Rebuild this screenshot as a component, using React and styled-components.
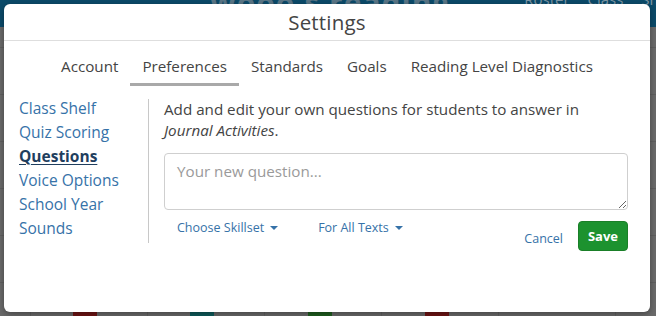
import React from "react";
import styled, { createGlobalStyle } from "styled-components";

const Global = createGlobalStyle`
  html, body { margin: 0; padding: 0; }
  body {
    width: 656px; height: 316px; overflow: hidden;
    font-family: "Open Sans", "Liberation Sans", sans-serif;
    background: #6b6b6b;
  }
`;

const Page = styled.div`
  position: relative;
  width: 656px;
  height: 316px;
  background: #6a6a6a;
  overflow: hidden;
`;

const TopBar = styled.div`
  height: 27px;
  background: #0b4a69;
  display: flex;
  align-items: flex-start;
  justify-content: space-between;
  padding: 0 0 0 210px;
  color: #6b8797;
  line-height: 1;
  overflow: hidden;
`;

const BrandGhost = styled.span`
  font-size: 30px;
  font-weight: 700;
  letter-spacing: 1px;
  margin-top: -12px;
  color: #5a7686;
`;

const NavGhost = styled.span`
  font-size: 15px;
  color: #7f97a5;
  margin-top: -8px;
  word-spacing: 14px;
  margin-right: -20px;
`;

const Grid = styled.div`
  height: 289px;
  background-image:
    linear-gradient(#5f5f5f 1px, transparent 1px),
    linear-gradient(90deg, #5f5f5f 1px, transparent 1px);
  background-size: 117px 47px;
  background-position: 30px 20px;
  position: relative;
`;

const Tile = styled.div`
  position: absolute;
  bottom: -10px;
  left: ${(p) => p.$x}px;
  width: 24px;
  height: 20px;
  border-radius: 4px;
  background: ${(p) => p.$c};
`;

const Modal = styled.div`
  position: absolute;
  left: 4px;
  top: 4px;
  width: 646px;
  height: 308px;
  background: #fff;
  border-radius: 6px;
  box-shadow: 0 2px 6px rgba(0, 0, 0, 0.35);
  display: flex;
  flex-direction: column;
  color: #444;
`;

const Header = styled.div`
  height: 36px;
  border-bottom: 1px solid #dedede;
  display: flex;
  align-items: center;
  justify-content: center;
  font-size: 20.5px;
  color: #444;
  letter-spacing: 0.2px;
`;

const Tabs = styled.div`
  display: flex;
  justify-content: center;
  margin-top: 12px;
`;

const Tab = styled.div`
  padding: 3px 12px 7px;
  font-size: 15.2px;
  color: #444;
  border-bottom: 3px solid ${(p) => (p.$active ? "#a9a9a9" : "transparent")};
`;

const Body = styled.div`
  display: flex;
  margin-top: 13px;
  padding: 0 22px 0 15px;
`;

const SideNav = styled.div`
  flex: 0 0 129px;
  border-right: 1px solid #c8c8c8;
  display: flex;
  flex-direction: column;
  height: 144px;
  & > :first-child { margin-top: -3px; }
`;

const NavItem = styled.a`
  font-size: 15.5px;
  line-height: 24px;
  color: ${(p) => (p.$active ? "#1f3e5e" : "#3672a8")};
  font-weight: ${(p) => (p.$active ? 700 : 400)};
  text-decoration: ${(p) => (p.$active ? "underline" : "none")};
  text-underline-offset: 2px;
  text-decoration-thickness: 1px;
  cursor: pointer;
`;

const Content = styled.div`
  flex: 1;
  padding-left: 15px;
  display: flex;
  flex-direction: column;
`;

const Intro = styled.p`
  margin: 0;
  font-size: 15.2px;
  line-height: 21px;
  color: #444;
  em { font-style: italic; }
`;

const TextArea = styled.textarea`
  margin-top: 12px;
  box-sizing: border-box;
  width: 100%;
  height: 57px;
  border: 1px solid #cfcfcf;
  border-radius: 4px;
  padding: 7px 12px;
  font-family: inherit;
  font-size: 15.2px;
  color: #444;
  resize: vertical;
  &::placeholder { color: #9a9a9a; }
`;

const Actions = styled.div`
  display: flex;
  align-items: flex-start;
  margin-top: 7px;
  padding-left: 13px;
`;

const Dropdown = styled.a`
  font-size: 12.5px;
  color: #3672a8;
  display: inline-flex;
  align-items: center;
  gap: 6px;
  margin-right: ${(p) => p.$gap}px;
  line-height: 18px;
  padding-top: 2px;
`;

const Caret = styled.span`
  width: 0;
  height: 0;
  border-left: 4px solid transparent;
  border-right: 4px solid transparent;
  border-top: 4px solid #3672a8;
`;

const Spacer = styled.div`
  flex: 1;
`;

const Cancel = styled.a`
  font-size: 12.5px;
  color: #3672a8;
  margin-top: 13px;
  margin-right: 15px;
`;

const SaveBtn = styled.button`
  margin-top: 4px;
  width: 50px;
  height: 30px;
  border: 1px solid #1a7f28;
  border-radius: 4px;
  background: #1c922f;
  color: #fff;
  font-family: inherit;
  font-weight: 700;
  font-size: 13px;
  padding: 0;
`;

export default function App() {
  return (
    <>
      <Global />
      <Page>
        <TopBar>
          <BrandGhost>wooo's reading</BrandGhost>
          <NavGhost>Roster Class Shelf</NavGhost>
        </TopBar>
        <Grid>
          <Tile $x={73} $c="#6e1414" />
          <Tile $x={190} $c="#0e5b5b" />
          <Tile $x={308} $c="#1f5e1f" />
          <Tile $x={425} $c="#6e1414" />
        </Grid>
        <Modal>
          <Header>Settings</Header>
          <Tabs>
            <Tab>Account</Tab>
            <Tab $active>Preferences</Tab>
            <Tab>Standards</Tab>
            <Tab>Goals</Tab>
            <Tab>Reading Level Diagnostics</Tab>
          </Tabs>
          <Body>
            <SideNav>
              <NavItem>Class Shelf</NavItem>
              <NavItem>Quiz Scoring</NavItem>
              <NavItem $active>Questions</NavItem>
              <NavItem>Voice Options</NavItem>
              <NavItem>School Year</NavItem>
              <NavItem>Sounds</NavItem>
            </SideNav>
            <Content>
              <Intro>
                Add and edit your own questions for students to answer in
                <br />
                <em>Journal Activities</em>.
              </Intro>
              <TextArea placeholder="Your new question..." />
              <Actions>
                <Dropdown $gap={40}>
                  Choose Skillset <Caret />
                </Dropdown>
                <Dropdown $gap={0}>
                  For All Texts <Caret />
                </Dropdown>
                <Spacer />
                <Cancel>Cancel</Cancel>
                <SaveBtn>Save</SaveBtn>
              </Actions>
            </Content>
          </Body>
        </Modal>
      </Page>
    </>
  );
}
